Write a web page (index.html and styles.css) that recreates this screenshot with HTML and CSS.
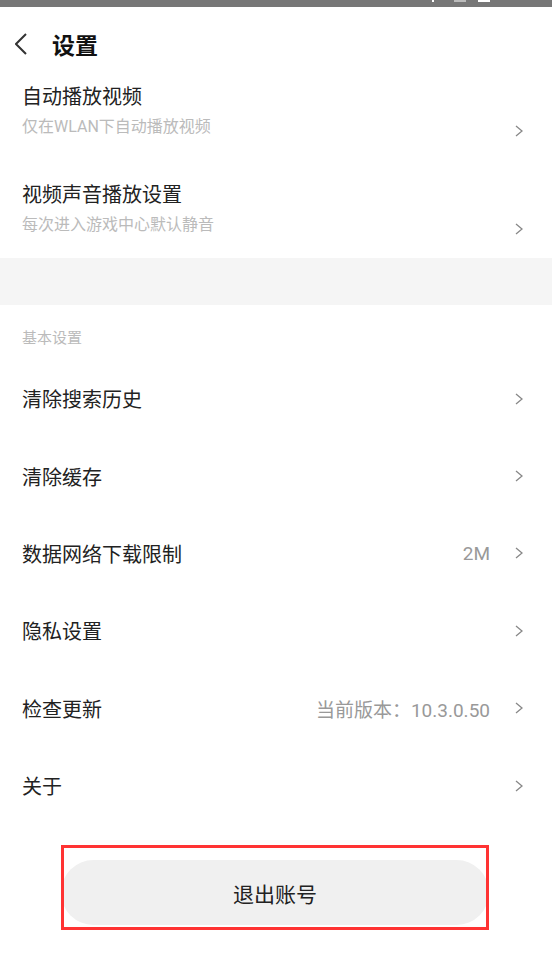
FILE: index.html
```html
<!DOCTYPE html>
<html lang="zh-CN">
<head>
    <meta charset="UTF-8">
    <meta name="viewport" content="width=device-width, initial-scale=1.0">
    <title>设置</title>
    <link rel="stylesheet" href="styles.css">
</head>
<body>
    <div class="status-bar">
        <span class="status-icon thin"></span>
        <span class="status-icon dim"></span>
        <span class="status-icon"></span>
    </div>

    <header class="top-bar">
        <svg class="back" width="12" height="22" viewBox="0 0 12 22">
            <polyline points="11,1 1,11 11,21" fill="none" stroke="#333" stroke-width="2"/>
        </svg>
        <h1>设置</h1>
    </header>

    <div class="video-list">
        <div class="item">
            <div class="item-text">
                <p class="item-title">自动播放视频</p>
                <p class="item-sub">仅在WLAN下自动播放视频</p>
            </div>
            <svg class="arrow" width="8" height="12" viewBox="0 0 8 12">
                <polyline points="1,1 7,6 1,11" fill="none" stroke="#888" stroke-width="1.3"/>
            </svg>
        </div>
        <div class="item">
            <div class="item-text">
                <p class="item-title">视频声音播放设置</p>
                <p class="item-sub">每次进入游戏中心默认静音</p>
            </div>
            <svg class="arrow" width="8" height="12" viewBox="0 0 8 12">
                <polyline points="1,1 7,6 1,11" fill="none" stroke="#888" stroke-width="1.3"/>
            </svg>
        </div>
    </div>

    <div class="divider"></div>

    <p class="section-label">基本设置</p>

    <div class="rows">
        <div class="row">
            <span class="row-title">清除搜索历史</span>
            <svg class="arrow" width="8" height="12" viewBox="0 0 8 12">
                <polyline points="1,1 7,6 1,11" fill="none" stroke="#888" stroke-width="1.3"/>
            </svg>
        </div>
        <div class="row">
            <span class="row-title">清除缓存</span>
            <svg class="arrow" width="8" height="12" viewBox="0 0 8 12">
                <polyline points="1,1 7,6 1,11" fill="none" stroke="#888" stroke-width="1.3"/>
            </svg>
        </div>
        <div class="row">
            <span class="row-title">数据网络下载限制</span>
            <span class="row-value">2M</span>
            <svg class="arrow" width="8" height="12" viewBox="0 0 8 12">
                <polyline points="1,1 7,6 1,11" fill="none" stroke="#888" stroke-width="1.3"/>
            </svg>
        </div>
        <div class="row">
            <span class="row-title">隐私设置</span>
            <svg class="arrow" width="8" height="12" viewBox="0 0 8 12">
                <polyline points="1,1 7,6 1,11" fill="none" stroke="#888" stroke-width="1.3"/>
            </svg>
        </div>
        <div class="row">
            <span class="row-title">检查更新</span>
            <span class="row-value">当前版本：10.3.0.50</span>
            <svg class="arrow" width="8" height="12" viewBox="0 0 8 12">
                <polyline points="1,1 7,6 1,11" fill="none" stroke="#888" stroke-width="1.3"/>
            </svg>
        </div>
        <div class="row">
            <span class="row-title">关于</span>
            <svg class="arrow" width="8" height="12" viewBox="0 0 8 12">
                <polyline points="1,1 7,6 1,11" fill="none" stroke="#888" stroke-width="1.3"/>
            </svg>
        </div>
    </div>

    <div class="logout-wrap">
        <button class="logout">退出账号</button>
    </div>
</body>
</html>
```

FILE: styles.css
```css
body {
    margin: 0;
    font-family: Roboto, "Noto Sans CJK SC", sans-serif;
    background-color: #fff;
    color: #222;
}
p {
    margin: 0;
}
.status-bar {
    height: 7px;
    background-color: #777;
    display: flex;
    justify-content: flex-end;
    align-items: flex-start;
    gap: 12px;
    padding-right: 62px;
}
.status-icon {
    width: 12px;
    height: 2px;
    background-color: #fff;
}
.status-icon.thin {
    width: 2px;
    margin-right: 8px;
}
.status-icon.dim {
    background-color: #bbb;
}
.top-bar {
    height: 74px;
    display: flex;
    align-items: center;
    padding-left: 15px;
}
.back {
    margin-right: 25px;
}
.top-bar h1 {
    margin: 0;
    font-size: 23px;
    font-weight: 700;
    color: #111;
}
.video-list {
    padding: 2px 0 22px;
}
.item {
    display: flex;
    align-items: flex-end;
    padding: 0 29px 0 22px;
}
.item + .item {
    margin-top: 43px;
}
.item-text {
    flex: 1;
}
.item-title {
    font-size: 20px;
    line-height: 28px;
}
.item-sub {
    margin-top: 5px;
    font-size: 16px;
    line-height: 22px;
    color: #bbb;
}
.item .arrow {
    margin-bottom: 1px;
}
.divider {
    height: 47px;
    background-color: #f5f5f5;
}
.section-label {
    margin-top: 23px;
    padding-left: 22px;
    font-size: 15px;
    line-height: 20px;
    color: #bbb;
}
.rows {
    margin-top: 12px;
}
.row {
    height: 77.4px;
    display: flex;
    align-items: center;
    padding: 0 29px 0 22px;
}
.row-title {
    flex: 1;
    font-size: 20px;
}
.row-value {
    font-size: 19px;
    color: #999;
    margin-right: 25px;
}
.logout-wrap {
    margin: 21px 63px 0 61px;
    padding: 15px 0 5px;
    position: relative;
}
.logout-wrap::after {
    content: "";
    position: absolute;
    inset: 0;
    border: 3px solid #f33;
}
.logout {
    display: block;
    width: 100%;
    height: 65px;
    border: none;
    border-radius: 33px;
    background-color: #f0f0f0;
    font-family: Roboto, "Noto Sans CJK SC", sans-serif;
    font-size: 21px;
    color: #222;
}
```
